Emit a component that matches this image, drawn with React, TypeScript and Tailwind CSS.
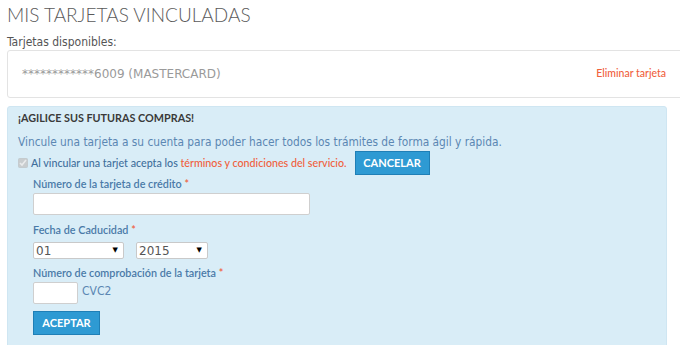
import React from "react"

const head = "font-['Lato','Open_Sans',sans-serif]"
const body = "font-['DejaVu_Sans_Condensed','DejaVu_Sans',sans-serif]"
const wide = "font-['DejaVu_Sans',sans-serif]"

function Label({ children }: { children: React.ReactNode }) {
  return (
    <label className={`${head} block text-[10.8px] font-semibold text-[#4a7aa8] leading-[14px]`}>
      {children} <span className="text-[#f0603c]">*</span>
    </label>
  )
}

function FakeSelect({ value, width }: { value: string; width: string }) {
  return (
    <div
      className={`${wide} ${width} h-[17px] flex items-center justify-between bg-white border border-[#c9c9c9] rounded-[2px] pl-[2px] pr-[5px] text-[12px] text-[#555]`}
    >
      <span>{value}</span>
      <span className="text-[7px] text-black">▼</span>
    </div>
  )
}

export default function App() {
  return (
    <div className="w-[680px] h-[345px] overflow-hidden bg-white pl-[7px]">
      <h1 className={`${head} font-light text-[19px] leading-[24px] text-[#5a5a5a] pt-[3px]`}>
        MIS TARJETAS VINCULADAS
      </h1>
      <p className={`${body} text-[12px] text-[#555] mt-[8px] leading-[14px]`}>Tarjetas disponibles:</p>
      <div className="mt-[1px] h-[48px] mr-[-10px] border border-[#e3e3e3] rounded-[3px] flex items-center justify-between pl-[14px] pr-[23px]">
        <span className={`${wide} text-[12px] text-[#9a9a9a]`}>************6009 (MASTERCARD)</span>
        <span className={`${head} text-[10.5px] font-medium text-[#f0603c]`}>Eliminar tarjeta</span>
      </div>

      <div className="mt-[8px] w-[660px] h-[250px] bg-[#d9edf7] border border-[#cfe6f2] rounded-t-[3px] pl-[10px] pt-[3px]">
        <h2 className={`${head} text-[10.8px] font-bold text-[#3a3a3a] leading-[16px]`}>
          ¡AGILICE SUS FUTURAS COMPRAS!
        </h2>
        <p className={`${body} text-[11.8px] text-[#5b87b3] mt-[8px] leading-[16px]`}>
          Vincule una tarjeta a su cuenta para poder hacer todos los trámites de forma ágil y rápida.
        </p>
        <div className="flex items-center mt-[1px]">
          <input type="checkbox" defaultChecked disabled className="w-[10px] h-[10px] m-0 mr-[3px]" />
          <span className={`${head} text-[10.7px] font-medium text-[#3f6f9c]`}>
            Al vincular una tarjet acepta los{" "}
            <span className="text-[#f0603c]">términos y condiciones del servicio.</span>
          </span>
          <button
            className={`${head} ml-[8px] w-[75px] h-[24px] bg-[#2e9ad3] border border-[#1f7fb6] text-white text-[11px] font-bold`}
          >
            CANCELAR
          </button>
        </div>

        <div className="pl-[15px] mt-[2px]">
          <Label>Número de la tarjeta de crédito</Label>
          <input className="block mt-[2px] w-[277px] h-[22px] bg-white border border-[#cfcfcf] rounded-[2px]" />

          <div className="mt-[8px]">
            <Label>Fecha de Caducidad</Label>
          </div>
          <div className="flex gap-[12px] mt-[5px]">
            <FakeSelect value="01" width="w-[91px]" />
            <FakeSelect value="2015" width="w-[72px]" />
          </div>

          <div className="mt-[7px]">
            <Label>Número de comprobación de la tarjeta</Label>
          </div>
          <div className="flex items-start mt-[2px]">
            <input className="w-[45px] h-[22px] bg-white border border-[#cfcfcf] rounded-[2px]" />
            <span className={`${body} text-[12px] text-[#5b87b3] ml-[4px] leading-[14px] mt-[2px]`}>CVC2</span>
          </div>

          <button
            className={`${head} block mt-[7px] w-[67px] h-[24px] bg-[#2e9ad3] border border-[#1f7fb6] text-white text-[11px] font-bold`}
          >
            ACEPTAR
          </button>
        </div>
      </div>
    </div>
  )
}
